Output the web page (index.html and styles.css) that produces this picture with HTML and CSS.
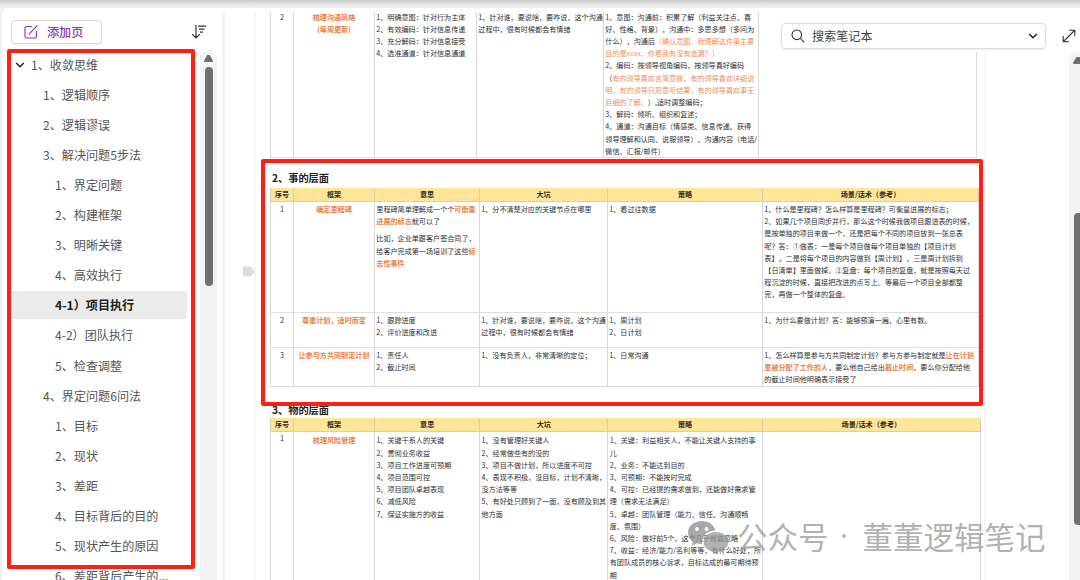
FILE: index.html
```html
<!DOCTYPE html>
<html lang="zh-CN">
<head>
<meta charset="utf-8">
<title>笔记本</title>
<link rel="stylesheet" href="styles.css">
</head>
<body>
<div class="topbar"></div>
<div class="app">
  <aside class="sidebar">
    <div class="side-head">
      <button class="add"><svg width="14" height="14" viewBox="0 0 14 14" fill="none" stroke="#8a35b5" stroke-width="1.1"><path d="M8 1.500H2.500a1.500 1.500 0 0 0-1.500 1.500v8.500A1.500 1.500 0 0 0 2.500 13H11a1.500 1.500 0 0 0 1.500-1.500V6"/><path d="M13.300.7 6 8l-1.200 1.700"/></svg>添加页</button>
      <svg class="sort" width="16" height="16" viewBox="0 0 16 16" fill="none" stroke="#333" stroke-width="1.200"><path d="M5 1v13M1.200 10.200 5 14l3.800-3.800M7 2.200h8M8 5.200h5.500M9 8.200h3"/></svg>
    </div>
    <div class="side-body">
      <nav class="pages">
        <div class="item l0"><svg width="10" height="8" viewBox="0 0 10 8" fill="none" stroke="#222" stroke-width="1.500"><path d="M1.200 2 5 5.800 8.800 2"/></svg>1、收敛思维</div>
        <div class="item l1">1、逻辑顺序</div>
        <div class="item l1">2、逻辑谬误</div>
        <div class="item l1">3、解决问题5步法</div>
        <div class="item l2">1、界定问题</div>
        <div class="item l2">2、构建框架</div>
        <div class="item l2">3、明晰关键</div>
        <div class="item l2">4、高效执行</div>
        <div class="item l2 active">4-1）项目执行</div>
        <div class="item l2">4-2）团队执行</div>
        <div class="item l2">5、检查调整</div>
        <div class="item l1">4、界定问题6问法</div>
        <div class="item l2">1、目标</div>
        <div class="item l2">2、现状</div>
        <div class="item l2">3、差距</div>
        <div class="item l2">4、目标背后的目的</div>
        <div class="item l2">5、现状产生的原因</div>
        <div class="item l2">6、差距背后产生的...</div>
      </nav>
      <div class="scroll"><i class="up"></i><i class="thumb"></i></div>
    </div>
  </aside>
  <div class="gutter"><svg width="12" height="11" viewBox="0 0 12 11"><path d="M0 .5h7.500L12 5.500 7.500 10.500H0z" fill="#dcdcdc"/></svg></div>
  <main class="canvas">
    <div class="doc">
      <table class="t1">
        <colgroup><col class="w23"><col class="w81"><col class="w102"><col class="w127"><col class="w155"><col class="w219"></colgroup>
        <tr class="h145"><td class="n">2</td><td class="k">梳理沟通风格<br>(每周更新)</td>
          <td>1、明确意图：针对行为主体<br>2、有效编码：针对信息传递<br>3、充分解码：针对信息接受<br>4、选准通道：针对信息通道</td>
          <td>1、针对谁，要说啥，要咋说，这个沟通<br>过程中，很有时候都会有情绪</td>
          <td>1、意图：沟通前：积累了解（利益关注点、喜<br>好、性格、背景），沟通中：多思多想（多问为<br>什么），沟通后<em>（确认意图。我理解这件事主要<br>目的是xxxx，你看我有没有遗漏？）</em><br>2、编码：按领导视角编码，按领导喜好编码<br>（<em>有的领导喜欢言简意赅，有的领导喜欢详细说<br>明，有的领导只愿意听结果，有的领导喜欢事无<br>巨细的了解。</em>）,适时调整编码；<br>3、解码：倾听、组织和复述；<br>4、通道：沟通目标（情感类、信息传递、获得<br>领导理解和认同、说服领导）、沟通内容（电话/<br>微信、汇报/邮件）</td><td></td></tr>
      </table>
      <h2 class="s2">2、事的层面</h2>
      <table class="t2">
        <colgroup><col class="w23"><col class="w81"><col class="w105"><col class="w128"><col class="w155"><col class="w216"></colgroup>
        <tr class="head"><th>序号</th><th>框架</th><th>意思</th><th>大坑</th><th>策略</th><th>场景/话术（参考）</th></tr>
        <tr class="h111"><td class="n">1</td><td class="k">确定里程碑</td>
          <td>里程碑简单理解成一个个<b>可衡量<br>进展的标志</b>就可以了<p>比如，企业单跟客户签合同了，<br>给客户完成第一场培训了这些<b>标<br>志性事件</b></p></td>
          <td>1、分不清楚对应的关键节点在哪里</td><td>1、看过往数据</td>
          <td>1、什么是里程碑？怎么样算是里程碑？可衡量进展的标志；<br>2、如果几个项目同步并行，那么这个时候我做项目跟进表的时候，<br>是按单独的项目来做一个，还是把每个不同的项目放到一张总表<br>呢？答：①做表：一是每个项目做每个项目单独的【项目计划<br>表】，二是将每个项目的内容做到【周计划】，三是周计划拆到<br>【日清单】里面做掉。②复盘：每个项目的复盘，就是按照每天过<br>程沉淀的时候，直接把改进的点写上。等最后一个项目全部都整<br>完，再做一个整体的复盘。</td></tr>
        <tr class="h35"><td class="n">2</td><td class="k">尊重计划，适时而变</td><td>1、跟踪进度<br>2、评价进度和改进</td><td>1、针对谁，要说啥，要咋说，这个沟通<br>过程中，很有时候都会有情绪</td><td>1、周计划<br>2、日计划</td><td>1、为什么要做计划？答：能够预演一遍，心里有数。</td></tr>
        <tr class="h39"><td class="n">3</td><td class="k">让参与方共同制定计划</td><td>1、责任人<br>2、截止时间</td><td>1、没有负责人，非常清晰的定位；</td><td>1、日常沟通</td><td>1、怎么样算是参与方共同制定计划？参与方参与制定就是<b>让在计划<br>里被分配了工作的人</b>，要么他自己给出<b>截止时间</b>，要么你分配给他<br>的截止时间他明确表示接受了</td></tr>
      </table>
      <h2 class="s3">3、物的层面</h2>
      <table class="t3">
        <colgroup><col class="w23"><col class="w81"><col class="w105"><col class="w128"><col class="w154"><col class="w219"></colgroup>
        <tr class="head"><th>序号</th><th>框架</th><th>意思</th><th>大坑</th><th>策略</th><th>场景/话术（参考）</th></tr>
        <tr class="h160"><td class="n">1</td><td class="k">梳理风险管理</td>
          <td>1、关键干系人的关键<br>2、贯彻业务收益<br>3、项目工作进度可预期<br>4、项目范围可控<br>5、项目团队卓越表现<br>6、减低风险<br>7、保证实施方的收益</td>
          <td>1、没有管理好关键人<br>2、经常做些有的没的<br>3、项目不做计划，所以进度不可控<br>4、表现不积极，没目标，计划不清晰，<br>没方法等等<br>5、有好处只顾到了一面，没有顾及到其<br>他方面</td>
          <td>1、关键：利益相关人，不能让关键人支持的事<br>儿<br>2、业务：不能达到目的<br>3、可预期：不能按时完成<br>4、可控：已经提的需求做到，还能做好需求管<br>理（需求无法满足）<br>5、卓越：团队管理（能力、信任、沟通顺畅<br>度、氛围）<br>6、风险：做好前5个，这个几乎就能忽略<br>7、收益：经济/能力/名利等等，有什么好处，所<br>有团队成员的核心诉求，目标达成的最可期待预<br>期</td><td></td></tr>
      </table>
    </div>
    <div class="scroll right"><i class="up"></i><i class="thumb"></i></div>
  </main>
</div>
<div class="searchbar">
  <div class="search"><svg width="14" height="14" viewBox="0 0 14 14" fill="none" stroke="#333" stroke-width="1.100"><circle cx="5.800" cy="5.800" r="4.800"/><path d="m9.300 9.300 4 4"/></svg><span>搜索笔记本</span><svg width="10" height="8" viewBox="0 0 10 8" fill="none" stroke="#222" stroke-width="1.500"><path d="M1.200 2 5 5.800 8.800 2"/></svg></div>
  <svg class="expand" width="14" height="14" viewBox="0 0 14 14" fill="none" stroke="#333" stroke-width="1.100"><path d="M1.500 12.500 12.500 1.500M7 1.200h5.800V7M1.200 7v5.800H7"/></svg>
</div>
<div class="mark mark-side"></div>
<div class="mark mark-doc"></div>
<div class="watermark">
  <svg width="42" height="34" viewBox="0 0 42 34"><path fill="#8c8c8c" d="M15 1C7 1 1 6 1 12.500c0 3.700 2 6.800 5 8.900L4.500 26l5.200-2.700c1.700.5 3.500.8 5.300.8C14.500 16 20 10.500 28.500 10.500 27 5 22 1 15 1z"/><path fill="#999" d="M29 12c-7 0-12.500 4.500-12.500 10S22 32 29 32c1.500 0 3-.2 4.300-.6L37.500 33.500l-1.200-3.600c3-1.800 5.200-4.700 5.200-7.900C41.500 16.500 36 12 29 12z"/><g fill="#fff"><circle cx="10" cy="9" r="1.900"/><circle cx="19.500" cy="9" r="1.900"/></g></svg>
  <span class="wm-a">公众号</span><span class="wm-dot"><i></i></span><span class="wm-b">董董逻辑笔记</span>
</div>
</body>
</html>
```
FILE: styles.css
```css
* { box-sizing: border-box; }
body {
  margin: 0; width: 1080px; height: 580px; overflow: hidden; position: relative;
  background: #f0f0f0; color: #444;
  font-family: "Noto Sans CJK SC", sans-serif;
  text-spacing-trim: space-all;
}
.topbar { height: 8px; background: linear-gradient(#c9c9c9, #e8e8e8 60%, #f0f0f0); }
.app { display: flex; height: 572px; margin-left: 2px; background: #fff; border-top-left-radius: 5px; }

.sidebar { width: 220px; display: flex; flex-direction: column; }
.side-head { height: 42px; flex: none; padding: 12px 16px 0 9px; display: flex; justify-content: space-between; align-items: flex-start; }
.add {
  width: 91px; height: 24px; padding: 0 0 0 12px; display: flex; align-items: center; gap: 9px;
  font: 500 12.1px/22px "Noto Sans CJK SC", sans-serif; color: #8a35b5; background: #fff;
  border: 1px solid #d8d8d8; border-radius: 4px; box-shadow: 0 1px 2px rgba(0,0,0,.08);
}
.sort { margin-top: 4px; margin-right: -1px; }
.side-body { flex: 1; min-height: 0; display: flex; justify-content: space-between; padding: 0 5px 0 10px; }
.pages { width: 175px; padding-top: .6px; overflow: hidden; }
.item { height: 28px; margin-bottom: 2.1px; line-height: 28px; font-size: 12.1px; white-space: nowrap; border-radius: 2px; color: #555; }
.l0 { padding-left: 3px; display: flex; align-items: center; gap: 6px; }
.l1 { padding-left: 31px; }
.l2 { padding-left: 43px; }
.active { background: #ebebeb; font-weight: 700; color: #222; }

.scroll { width: 17px; background: #f3f3f3; border-radius: 8px 8px 0 0; display: flex; flex-direction: column; align-items: center; padding-top: 5px; }
.up { width: 9px; height: 7px; background: #6f6f6f; clip-path: polygon(35% 0, 65% 0, 100% 85%, 95% 100%, 5% 100%, 0 85%); }
.thumb { width: 8px; height: 219px; margin-top: 5px; border-radius: 4px; background: #707070; }

.gutter { width: 34px; border-left: 3px solid #f2f2f2; border-right: 2px solid #f5f5f5; padding: 254px 0 0 18px; margin-top: 4px; }
.gutter svg { display: block; }
.canvas { flex: 1; min-width: 0; display: flex; padding-top: 4px; overflow: hidden; }
.doc { width: 730px; padding-left: 14px; border-right: 2px solid #f5f5f5; flex: none; overflow: hidden; }
.right { width: 18px; margin: 40px -7px 0 auto; }
.right .up { width: 10px; }
.right .thumb { height: 312px; margin-top: 149px; flex: none; width: 9px; }

table { table-layout: fixed; border-collapse: separate; border-spacing: 0; font-size: 7.1px; line-height: 12.2px; color: #303030; }
td, th { padding: 1px 0 0 1.3px; vertical-align: top; white-space: nowrap; border-left: 1px solid #d8d8d8; border-bottom: 1px solid #dfdfdf; }
tr > :last-child { border-right: 1px solid #dcdcdc; }
.t1 { width: 707px; margin-top: -1.5px; }
.t1 td { padding-top: 0; }
.t2 { width: 709px; }
.t3 { width: 711px; }
.t3 td { padding-top: 2px; }
.t3 td.n { padding-top: 0; }
.head th { height: 14px; padding: 0; line-height: 13px; font-weight: 700; color: #2b2b2b; background: #ffe597; text-align: center; border-color: #d9cfa9; }
.w23 { width: 23px; } .w81 { width: 81px; } .w102 { width: 102px; } .w105 { width: 105px; }
.w127 { width: 127px; } .w128 { width: 128px; } .w154 { width: 154px; } .w155 { width: 155px; }
.w216 { width: 217px; } .w219 { width: 219px; }
.h145 { height: 145px; } .h111 { height: 111px; } .h35 { height: 35px; } .h39 { height: 39px; } .h160 { height: 160px; }
td.n { text-align: center; padding-left: 0; }
td.k { text-align: center; padding-left: 0; font-weight: 700; color: #ec8042; }
td em { font-style: normal; color: #ea915c; }
td b { color: #ec8042; }
td p { margin: 5px 0 0; }
h2 { margin: 0; padding-left: 2px; font-size: 10.2px; font-weight: 700; color: #222; white-space: nowrap; }
.s2 { height: 30px; line-height: 15px; padding-top: 12.5px; }
.s3 { height: 31.5px; line-height: 15px; padding-top: 15.5px; }

.searchbar { position: absolute; left: 760px; top: 12px; width: 320px; height: 40px; background: #fff; padding: 11px 0 0 21px; display: flex; gap: 16px; }
.search {
  width: 265px; height: 26px; flex: none; display: flex; align-items: center; padding: 0 7px 0 9px; gap: 7px;
  border: 1px solid #dcdcdc; border-radius: 4px; box-shadow: 0 1px 3px rgba(0,0,0,.08);
  font-size: 12.1px; color: #444;
}
.search span { flex: 1; position: relative; top: -1px; }
.expand { flex: none; margin-top: 6px; }

.mark { position: absolute; border: 4px solid #ff2015; border-radius: 2px; }
.mark-side { left: 7px; top: 49px; width: 188px; height: 520px; }
.mark-doc { left: 261px; top: 159px; width: 722px; height: 247px; }
.watermark { position: absolute; left: 687px; top: 515px; height: 42px; display: flex; align-items: center; color: #999; font-size: 30.5px; line-height: 42px; white-space: nowrap; opacity: .75; }
.watermark svg { margin-top: 1px; }
.wm-a { margin-left: 8px; }
.wm-dot { width: 34px; display: flex; justify-content: center; }
.wm-dot i { width: 4px; height: 4px; border-radius: 50%; background: #999; margin-right: 4px; }
```
